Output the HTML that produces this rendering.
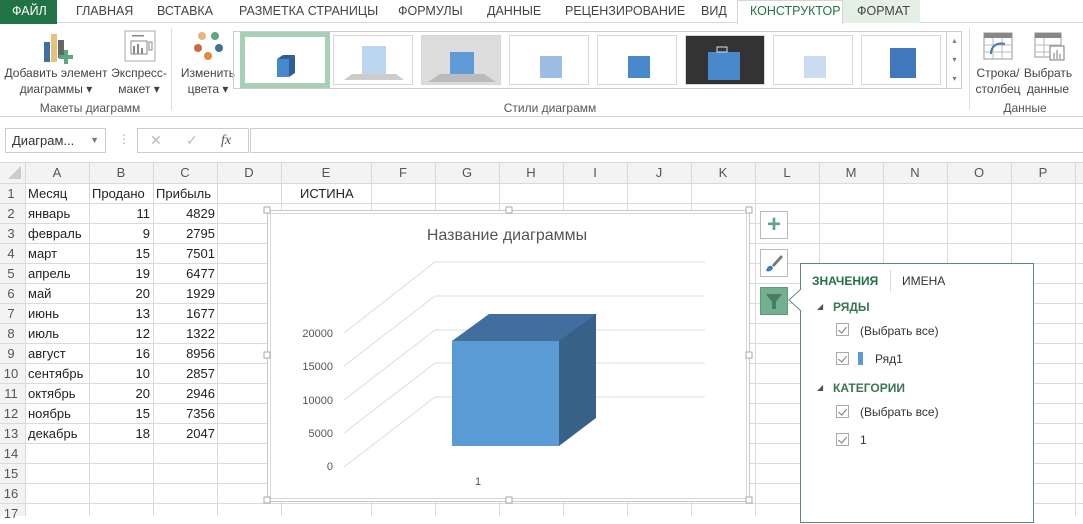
<!DOCTYPE html>
<html><head><meta charset="utf-8"><style>
*{margin:0;padding:0;box-sizing:border-box}
body{width:1083px;height:516px;overflow:hidden;background:#fff;font-family:"Liberation Sans",sans-serif;color:#444;position:relative}
.a{position:absolute}
.tab{position:absolute;top:4px;font-size:12.5px;color:#444}
.cell{position:absolute;font-size:13px;color:#222;height:20px;line-height:20px}
.rh{position:absolute;left:0;width:22px;text-align:center;font-size:13px;color:#555;height:20px;line-height:20px}
.ch{position:absolute;top:163px;height:20px;line-height:20px;text-align:center;font-size:13px;color:#555}
.th{position:absolute;top:35px;width:80px;height:50px;background:#fff;border:1px solid #d8d8d8}
.lbl{position:absolute;font-size:12px;color:#444;text-align:center;line-height:16px}
.pt{position:absolute;font-size:12px;color:#333}
.cb{position:absolute;width:13px;height:13px;border:1px solid #aaa;background:#fff}
.cb:after{content:"";position:absolute;left:3px;top:1px;width:4px;height:7px;border:solid #777;border-width:0 1.5px 1.5px 0;transform:rotate(40deg)}
</style></head><body>
<div class="a" style="left:0;top:0;width:1083px;height:23px;border-bottom:1px solid #d5d5d5"></div>
<div class="a" style="left:0;top:0;width:57px;height:24px;background:#217346"></div>
<div class="tab" style="left:12px;color:#fff">ФАЙЛ</div>
<div class="tab" style="left:76px">ГЛАВНАЯ</div>
<div class="tab" style="left:157px">ВСТАВКА</div>
<div class="tab" style="left:239px">РАЗМЕТКА СТРАНИЦЫ</div>
<div class="tab" style="left:398px">ФОРМУЛЫ</div>
<div class="tab" style="left:487px">ДАННЫЕ</div>
<div class="tab" style="left:565px">РЕЦЕНЗИРОВАНИЕ</div>
<div class="tab" style="left:701px">ВИД</div>
<div class="a" style="left:737px;top:0;width:106px;height:24px;background:#fff;border:1px solid #d5d5d5;border-bottom:none"></div>
<div class="tab" style="left:750px;color:#217346">КОНСТРУКТОР</div>
<div class="a" style="left:843px;top:0;width:77px;height:23px;background:#e4efe6"></div>
<div class="tab" style="left:857px">ФОРМАТ</div>
<div class="a" style="left:0;top:116px;width:1083px;height:1px;background:#d5d5d5"></div>
<svg class="a" style="left:40px;top:32px" width="36" height="32"><rect x="4" y="10" width="6" height="20" fill="#3f6fa3"/><rect x="11" y="2" width="6" height="28" fill="#e5c17a"/><rect x="18" y="8" width="6" height="18" fill="#666"/><path d="M24 18h4v5h5v4h-5v5h-4v-5h-5v-4h5z" fill="#5ea585"/></svg>
<div class="lbl" style="left:4px;top:65px;width:104px">Добавить элемент<br>диаграммы ▾</div>
<svg class="a" style="left:124px;top:30px" width="32" height="32"><rect x="1" y="1" width="30" height="30" fill="#fff" stroke="#aaa"/><rect x="8" y="5" width="12" height="1.5" fill="#888"/><rect x="7" y="11" width="16" height="13" fill="none" stroke="#888"/><path d="M10 24v-8M14 24v-10M18 24v-6" stroke="#888" stroke-width="2"/><rect x="25" y="12" width="3" height="8" fill="none" stroke="#888"/></svg>
<div class="lbl" style="left:108px;top:65px;width:62px">Экспресс-<br>макет ▾</div>
<div class="lbl" style="left:20px;top:100px;width:140px;color:#555">Макеты диаграмм</div>
<div class="a" style="left:171px;top:28px;width:1px;height:82px;background:#ddd"></div>
<svg class="a" style="left:192px;top:30px" width="34" height="32"><circle cx="10" cy="6" r="4" fill="#e3b77a"/><circle cx="23" cy="6" r="4" fill="#5ea585"/><circle cx="6" cy="18" r="4" fill="#c86a3a"/><circle cx="27" cy="18" r="4" fill="#3f6fa3"/><circle cx="16" cy="26" r="4" fill="#e38a3a"/></svg>
<div class="lbl" style="left:176px;top:65px;width:64px">Изменить<br>цвета ▾</div>
<div class="a" style="left:233px;top:31px;width:729px;height:58px;border:1px solid #ccc"></div>
<div class="a" style="left:240px;top:32px;width:90px;height:56px;background:#a8d0b6"></div>
<div class="th" style="left:245px;top:37px;width:80px;height:46px;border:none"><svg width="80" height="46"><path d="M32 22l6-4h12l-6 4z" fill="#2f5e95"/><path d="M50 18v18l-6 4V22z" fill="#2f5e95"/><rect x="32" y="22" width="12" height="18" fill="#4a88cc"/></svg></div>
<div class="th" style="left:333px"><svg width="80" height="50"><rect x="28" y="10" width="24" height="34" fill="#bcd6f2"/><path d="M10 44h60l-8-6H18z" fill="#ccc"/></svg></div>
<div class="th" style="left:421px;background:#dcdcdc"><svg width="80" height="50"><rect x="28" y="16" width="24" height="24" fill="#5f9bd6"/><path d="M6 46h68l-12-8H18z" fill="#bbb"/></svg></div>
<div class="th" style="left:509px"><svg width="80" height="50"><rect x="30" y="20" width="22" height="22" fill="#9dbde4"/></svg></div>
<div class="th" style="left:597px"><svg width="80" height="50"><rect x="30" y="20" width="22" height="22" fill="#4a88cc"/></svg></div>
<div class="th" style="left:685px;background:#333"><svg width="80" height="50"><rect x="22" y="16" width="32" height="28" fill="#4a88cc"/><rect x="31" y="11" width="10" height="5" fill="none" stroke="#ddd"/></svg></div>
<div class="th" style="left:773px"><svg width="80" height="50"><rect x="30" y="20" width="22" height="22" fill="#c9dcf2"/></svg></div>
<div class="th" style="left:861px"><svg width="80" height="50"><rect x="28" y="12" width="26" height="30" fill="#3f78bb"/></svg></div>
<div class="a" style="left:946px;top:31px;width:16px;height:58px;border-left:1px solid #ccc;font-size:8px;color:#777;text-align:center;line-height:19px">▴<br>▾<br>▾</div>
<div class="lbl" style="left:480px;top:100px;width:140px;color:#555">Стили диаграмм</div>
<div class="a" style="left:969px;top:28px;width:1px;height:82px;background:#ddd"></div>
<svg class="a" style="left:983px;top:32px" width="30" height="28"><rect x="1" y="1" width="28" height="26" fill="#fff" stroke="#999"/><rect x="1" y="1" width="28" height="5" fill="#888"/><path d="M1 13h28M1 20h28M10 6v21M19 6v21" stroke="#bbb"/><path d="M8 22c0-8 6-12 14-10" stroke="#3f78bb" stroke-width="2" fill="none"/></svg>
<svg class="a" style="left:1034px;top:32px" width="32" height="30"><rect x="1" y="1" width="26" height="24" fill="#fff" stroke="#999"/><rect x="1" y="1" width="26" height="5" fill="#888"/><path d="M1 13h26M1 20h26M10 6v19" stroke="#bbb"/><rect x="16" y="14" width="14" height="14" fill="#fff" stroke="#777"/><path d="M20 27v-6M23 27v-9M26 27v-5" stroke="#777"/></svg>
<div class="lbl" style="left:973px;top:65px;width:50px">Строка/<br>столбец</div>
<div class="lbl" style="left:1022px;top:65px;width:52px">Выбрать<br>данные</div>
<div class="lbl" style="left:990px;top:100px;width:70px;color:#555">Данные</div>
<div class="a" style="left:5px;top:128px;width:101px;height:25px;border:1px solid #ccc;font-size:13px;line-height:23px;padding-left:6px;color:#333">Диаграм...<span style="position:absolute;right:6px;font-size:9px;color:#777">▼</span></div>
<div class="a" style="left:118px;top:132px;font-size:12px;color:#aaa">⋮</div>
<div class="a" style="left:137px;top:128px;width:112px;height:25px;border:1px solid #ccc;font-size:14px;color:#bbb;line-height:23px"><span style="position:absolute;left:12px">✕</span><span style="position:absolute;left:48px">✓</span><span style="position:absolute;left:83px;color:#555;font-family:'Liberation Serif',serif;font-style:italic">fx</span></div>
<div class="a" style="left:250px;top:128px;width:833px;height:25px;border:1px solid #ccc;border-right:none"></div>
<svg class="a" style="left:0;top:162px" width="1083" height="354">
<rect x="0" y="0" width="1083" height="21" fill="#f3f3f3"/>
<rect x="0" y="0" width="25" height="354" fill="#f3f3f3"/>
<path d="M21 4v13h-13z" fill="#ccc"/>
<g stroke="#dadada">
<path d="M0 .5h1083"/>
<path d="M0 21.5h1083M0 41.5h1083M0 61.5h1083M0 81.5h1083M0 101.5h1083M0 121.5h1083M0 141.5h1083M0 161.5h1083M0 181.5h1083M0 201.5h1083M0 221.5h1083M0 241.5h1083M0 261.5h1083M0 281.5h1083M0 301.5h1083M0 321.5h1083M0 341.5h1083"/>
<path d="M25.5 0v354M89.5 0v354M153.5 0v354M217.5 0v354M281.5 0v354M371.5 0v354M435.5 0v354M499.5 0v354M563.5 0v354M627.5 0v354M691.5 0v354M755.5 0v354M819.5 0v354M883.5 0v354M947.5 0v354M1011.5 0v354M1075.5 0v354"/>
</g></svg>
<div class="ch" style="left:25px;width:64px">A</div><div class="ch" style="left:89px;width:64px">B</div><div class="ch" style="left:153px;width:64px">C</div><div class="ch" style="left:217px;width:64px">D</div><div class="ch" style="left:281px;width:90px">E</div><div class="ch" style="left:371px;width:64px">F</div><div class="ch" style="left:435px;width:64px">G</div><div class="ch" style="left:499px;width:64px">H</div><div class="ch" style="left:563px;width:64px">I</div><div class="ch" style="left:627px;width:64px">J</div><div class="ch" style="left:691px;width:64px">K</div><div class="ch" style="left:755px;width:64px">L</div><div class="ch" style="left:819px;width:64px">M</div><div class="ch" style="left:883px;width:64px">N</div><div class="ch" style="left:947px;width:64px">O</div><div class="ch" style="left:1011px;width:64px">P</div>
<div class="rh" style="top:184px">1</div><div class="rh" style="top:204px">2</div><div class="rh" style="top:224px">3</div><div class="rh" style="top:244px">4</div><div class="rh" style="top:264px">5</div><div class="rh" style="top:284px">6</div><div class="rh" style="top:304px">7</div><div class="rh" style="top:324px">8</div><div class="rh" style="top:344px">9</div><div class="rh" style="top:364px">10</div><div class="rh" style="top:384px">11</div><div class="rh" style="top:404px">12</div><div class="rh" style="top:424px">13</div><div class="rh" style="top:444px">14</div><div class="rh" style="top:464px">15</div><div class="rh" style="top:484px">16</div><div class="rh" style="top:504px">17</div>
<div class="cell" style="left:28px;top:184px">Месяц</div><div class="cell" style="left:92px;top:184px">Продано</div><div class="cell" style="left:156px;top:184px">Прибыль</div><div class="cell" style="left:300px;top:184px">ИСТИНА</div>
<div style="position:absolute;left:28px;top:204px;font-size:13px;color:#222;line-height:20px">январь<br>февраль<br>март<br>апрель<br>май<br>июнь<br>июль<br>август<br>сентябрь<br>октябрь<br>ноябрь<br>декабрь</div>
<div style="position:absolute;left:90px;width:60px;top:204px;font-size:13px;color:#222;line-height:20px;text-align:right">11<br>9<br>15<br>19<br>20<br>13<br>12<br>16<br>10<br>20<br>15<br>18</div>
<div style="position:absolute;left:154px;width:61px;top:204px;font-size:13px;color:#222;line-height:20px;text-align:right">4829<br>2795<br>7501<br>6477<br>1929<br>1677<br>1322<br>8956<br>2857<br>2946<br>7356<br>2047</div>
<svg class="a" style="left:262px;top:205px" width="495" height="302">
<rect x="5.5" y="5.5" width="482" height="291" fill="#fff" stroke="#c8c8c8"/>
<rect x="8.5" y="8.5" width="476" height="285" fill="none" stroke="#d8d8d8"/>
<g fill="#fff" stroke="#aaa"><rect x="2" y="2" width="6" height="6"/><rect x="244" y="2" width="6" height="6"/><rect x="484" y="2" width="6" height="6"/><rect x="2" y="147" width="6" height="6"/><rect x="484" y="147" width="6" height="6"/><rect x="2" y="292" width="6" height="6"/><rect x="244" y="292" width="6" height="6"/><rect x="484" y="292" width="6" height="6"/></g>
<g stroke="#dcdcdc" fill="none"><path d="M82 128L173 57h270M82 161L173 91h270M82 195L173 125h270M82 228L173 158h270M82 262L173 192h270"/></g>
<g font-size="11" fill="#555" text-anchor="end" font-family="Liberation Sans"><text x="71" y="132">20000</text><text x="71" y="165">15000</text><text x="71" y="199">10000</text><text x="71" y="232">5000</text><text x="71" y="265">0</text></g>
<text x="216" y="280" font-size="11" fill="#555" text-anchor="middle">1</text>
<text x="245" y="35" font-size="16" fill="#555" text-anchor="middle">Название диаграммы</text>
<path d="M190 136l37-27h108l-37 27z" fill="#3f6e9f"/>
<path d="M297 136l37-27v104l-37 28z" fill="#386188"/>
<rect x="190" y="136" width="107" height="105" fill="#5b9bd5"/>
</svg>
<div class="a" style="left:760px;top:211px;width:28px;height:28px;border:1px solid #bbb;background:#fff;color:#5ea585;font-size:24px;font-weight:bold;text-align:center;line-height:26px">+</div>
<div class="a" style="left:760px;top:249px;width:28px;height:28px;border:1px solid #bbb;background:#fff"><svg width="26" height="26"><path d="M20 5l2 2-9 10-2-2z" fill="#777"/><path d="M5 21c1-4 3-6 6-5l1 2c-1 3-4 4-7 3z" fill="#3f78bb"/></svg></div>
<div class="a" style="left:760px;top:287px;width:28px;height:28px;background:#72b08f;border:1px solid #5e9a7a"><svg width="26" height="26"><path d="M5 6h16l-6 8v7h-4v-7z" fill="#4c7d62"/></svg></div>
<div class="a" style="left:800px;top:263px;width:234px;height:260px;border:1px solid #5e8a72;background:#fff"></div>
<svg class="a" style="left:788px;top:289px" width="14" height="22"><path d="M13 0L1 11l12 11" fill="#fff" stroke="#5e8a72"/></svg>
<div class="pt" style="left:812px;top:274px;font-weight:bold;color:#217346;font-size:12px">ЗНАЧЕНИЯ</div>
<div class="a" style="left:890px;top:270px;width:1px;height:22px;background:#ddd"></div>
<div class="pt" style="left:902px;top:274px">ИМЕНА</div>
<div class="pt" style="left:817px;top:302px;font-size:8px;color:#555">◢</div>
<div class="pt" style="left:833px;top:300px;font-weight:bold;color:#3a7556">РЯДЫ</div>
<div class="cb" style="left:836px;top:323px"></div><div class="pt" style="left:860px;top:324px">(Выбрать все)</div>
<div class="cb" style="left:836px;top:352px"></div><div class="a" style="left:858px;top:352px;width:5px;height:13px;background:#5b9bd5"></div><div class="pt" style="left:875px;top:352px">Ряд1</div>
<div class="pt" style="left:817px;top:383px;font-size:8px;color:#555">◢</div>
<div class="pt" style="left:833px;top:381px;font-weight:bold;color:#3a7556">КАТЕГОРИИ</div>
<div class="cb" style="left:836px;top:405px"></div><div class="pt" style="left:860px;top:405px">(Выбрать все)</div>
<div class="cb" style="left:836px;top:433px"></div><div class="pt" style="left:860px;top:433px">1</div>
</body></html>
